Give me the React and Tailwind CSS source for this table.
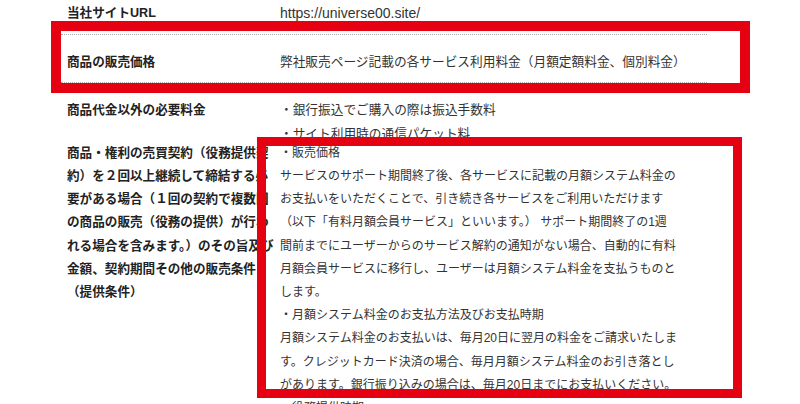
import React from "react";

const font = { fontFamily: '"Liberation Sans", "Noto Sans CJK JP", sans-serif' };

const terms = [
  "・販売価格",
  "サービスのサポート期間終了後、各サービスに記載の月額システム料金の",
  "お支払いをいただくことで、引き続き各サービスをご利用いただけます",
  "（以下「有料月額会員サービス」といいます。） サポート期間終了の1週",
  "間前までにユーザーからのサービス解約の通知がない場合、自動的に有料",
  "月額会員サービスに移行し、ユーザーは月額システム料金を支払うものと",
  "します。",
  "・月額システム料金のお支払方法及びお支払時期",
  "月額システム料金のお支払いは、毎月20日に翌月の料金をご請求いたしま",
  "す。クレジットカード決済の場合、毎月月額システム料金のお引き落とし",
  "があります。銀行振り込みの場合は、毎月20日までにお支払いください。",
  "・役務提供時期",
];

const termLabel = [
  "商品・権利の売買契約（役務提供契",
  "約）を２回以上継続して締結する必",
  "要がある場合（１回の契約で複数回",
  "の商品の販売（役務の提供）が行わ",
  "れる場合を含みます。）のその旨及び",
  "金額、契約期間その他の販売条件",
  "（提供条件）",
];

function Row({ label, children, className = "" }) {
  return (
    <div className={`flex ${className}`}>
      <div className="w-[219px] shrink-0 pl-[6px] font-bold text-[#222] text-[12.6px] overflow-hidden whitespace-nowrap">
        {label}
      </div>
      <div className="flex-1 text-[#333] text-[12.7px]">{children}</div>
    </div>
  );
}

export default function App() {
  return (
    <div className="relative w-[800px] h-[404px] overflow-hidden bg-white" style={font}>
      <div className="ml-[61px] w-[646px] -mt-[14px] leading-[23.2px]">
        <Row label="当社サイトURL" className="pt-4 pb-2 border-b border-dotted border-[#aaa]">
          <span className="text-[14px]">https://universe00.site/</span>
        </Row>
        <Row label="商品の販売価格" className="pt-4 pb-2 border-b border-dotted border-[#aaa]">
          弊社販売ページ記載の各サービス利用料金（月額定額料金、個別料金）
        </Row>
        <Row label="商品代金以外の必要料金" className="pt-4">
          <div>・銀行振込でご購入の際は振込手数料</div>
          <div>・サイト利用時の通信パケット料</div>
        </Row>
        <Row
          label={termLabel.map((l) => (
            <div key={l}>{l}</div>
          ))}
          className="-mt-[4px]"
        >
          <div className="text-[12px] whitespace-nowrap">
            {terms.map((t) => (
              <div key={t}>{t}</div>
            ))}
          </div>
        </Row>
      </div>

      {/* annotation boxes */}
      <div className="absolute left-[51px] top-[21px] w-[699px] h-[72px] border-[10px] border-[#e50012]" />
      <div className="absolute left-[257px] top-[137px] w-[485px] h-[261px] border-[9px] border-[#e50012]" />
    </div>
  );
}
